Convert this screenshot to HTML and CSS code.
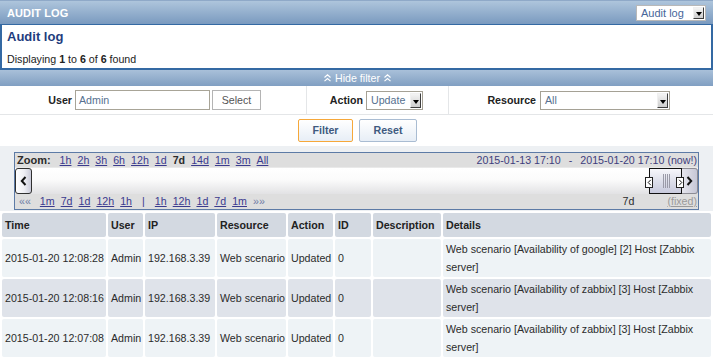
FILE: index.html
```html
<!DOCTYPE html>
<html>
<head>
<meta charset="utf-8">
<title>Audit log</title>
<link rel="stylesheet" href="styles.css">
</head>
<body>
<div class="page-header">
  <span class="page-title">AUDIT LOG</span>
  <div class="select select-header"><span class="select-text">Audit log</span><span class="select-arrow"></span></div>
</div>

<div class="title-box">
  <h1 class="title">Audit log</h1>
  <div class="paging">Displaying <b>1</b> to <b>6</b> of <b>6</b> found</div>
</div>

<div class="filter-toggle">
  <svg class="chev" width="7" height="8" viewBox="0 0 7 8"><path d="M0.5 3.5 L3.5 0.8 L6.5 3.5 M0.5 7.2 L3.5 4.5 L6.5 7.2" fill="none" stroke="#fff" stroke-width="1.1"/></svg>
  <span>Hide filter</span>
  <svg class="chev" width="7" height="8" viewBox="0 0 7 8"><path d="M0.5 3.5 L3.5 0.8 L6.5 3.5 M0.5 7.2 L3.5 4.5 L6.5 7.2" fill="none" stroke="#fff" stroke-width="1.1"/></svg>
</div>

<div class="filter">
  <div class="filter-row">
    <div class="fcell">
      <span class="flabel flabel-user">User</span>
      <div class="input input-user">Admin</div>
      <div class="btn-select">Select</div>
    </div>
    <div class="fcell">
      <span class="flabel flabel-action">Action</span>
      <div class="select select-action"><span class="select-text">Update</span><span class="select-arrow"></span></div>
    </div>
    <div class="fcell fcell-last">
      <span class="flabel flabel-resource">Resource</span>
      <div class="select select-resource"><span class="select-text">All</span><span class="select-arrow"></span></div>
    </div>
  </div>
  <div class="filter-buttons">
    <div class="btn btn-filter">Filter</div>
    <div class="btn btn-reset">Reset</div>
  </div>
</div>

<div class="timeline">
  <div class="tl-zoom">
    <div class="tl-links">
      <b class="tl-label">Zoom:</b>
      <a>1h</a><a>2h</a><a>3h</a><a>6h</a><a>12h</a><a>1d</a><b class="cur">7d</b><a>14d</a><a>1m</a><a>3m</a><a>All</a>
    </div>
    <div class="tl-dates"><span>2015-01-13 17:10</span><span class="dash">-</span><span>2015-01-20 17:10</span> <span>(now!)</span></div>
  </div>
  <div class="tl-scroll">
    <div class="tl-btn tl-btn-left">
      <svg width="7" height="10" viewBox="0 0 7 10"><path d="M5.5 1 L1.8 5 L5.5 9" fill="none" stroke="#111" stroke-width="2"/></svg>
    </div>
    <div class="tl-track">
      <div class="tl-handle">
        <span class="tl-grip-box tl-grip-left"><svg width="5" height="7" viewBox="0 0 5 7"><path d="M3.8 0.8 L1.2 3.5 L3.8 6.2" fill="none" stroke="#111" stroke-width="1"/></svg></span>
        <span class="tl-grip"></span>
        <span class="tl-grip-box tl-grip-right"><svg width="5" height="7" viewBox="0 0 5 7"><path d="M1.2 0.8 L3.8 3.5 L1.2 6.2" fill="none" stroke="#111" stroke-width="1"/></svg></span>
      </div>
    </div>
    <div class="tl-btn tl-btn-right">
      <svg width="7" height="10" viewBox="0 0 7 10"><path d="M1.5 1 L5.2 5 L1.5 9" fill="none" stroke="#111" stroke-width="2"/></svg>
    </div>
  </div>
  <div class="tl-nav">
    <div class="tl-links">
      <span class="arr arr-left">««</span>
      <a>1m</a><a>7d</a><a>1d</a><a>12h</a><a>1h</a>
      <span class="sep">|</span>
      <a>1h</a><a>12h</a><a>1d</a><a>7d</a><a>1m</a>
      <span class="arr">»»</span>
    </div>
    <div class="tl-period"><span class="period">7d</span><span class="fixed">(fixed)</span></div>
  </div>
</div>

<table class="log">
  <thead>
    <tr>
      <th class="c-time">Time</th>
      <th class="c-user">User</th>
      <th class="c-ip">IP</th>
      <th class="c-res">Resource</th>
      <th class="c-act">Action</th>
      <th class="c-id">ID</th>
      <th class="c-desc">Description</th>
      <th class="c-det">Details</th>
    </tr>
  </thead>
  <tbody>
    <tr class="row-odd">
      <td>2015-01-20 12:08:28</td><td>Admin</td><td>192.168.3.39</td><td>Web scenario</td><td>Updated</td><td>0</td><td></td>
      <td class="wrap">Web scenario [Availability of google] [2] Host [Zabbix server]</td>
    </tr>
    <tr class="row-even">
      <td>2015-01-20 12:08:16</td><td>Admin</td><td>192.168.3.39</td><td>Web scenario</td><td>Updated</td><td>0</td><td></td>
      <td class="wrap">Web scenario [Availability of zabbix] [3] Host [Zabbix server]</td>
    </tr>
    <tr class="row-odd">
      <td>2015-01-20 12:07:08</td><td>Admin</td><td>192.168.3.39</td><td>Web scenario</td><td>Updated</td><td>0</td><td></td>
      <td class="wrap">Web scenario [Availability of zabbix] [3] Host [Zabbix server]</td>
    </tr>
  </tbody>
</table>
</body>
</html>
```

FILE: styles.css
```css
* { box-sizing: border-box; }

body {
  margin: 0;
  background: #edf0f3;
  font-family: "Liberation Sans", Arial, sans-serif;
  font-size: 10.667px;
  color: #2b2b2b;
}

/* header */
.page-header {
  height: 24px;
  display: flex;
  align-items: center;
  justify-content: space-between;
  padding: 0 7px 0 7px;
  background: linear-gradient(#aec5dc, #7a9abf);
  border-top: 1px solid #8fa9c8;
}
.page-title {
  color: #fff;
  font-weight: bold;
  font-size: 11px;
  letter-spacing: 0.1px;
}

/* selects */
.select {
  display: flex;
  align-items: stretch;
  background: #fff;
  border: 1px solid #a5a195;
  height: 19px;
}
.select-text {
  flex: 1;
  padding-left: 4px;
  color: #56708f;
  line-height: 17px;
  font-size: 10.667px;
}
.select-arrow {
  width: 11px;
  margin: 1px 1px 1px 0;
  background: linear-gradient(#f4f4f4, #cdcdcd);
  border-right: 1px solid #3e3e3e;
  border-bottom: 1px solid #3e3e3e;
  border-top: 1px solid #f0f0f0;
  border-left: 1px solid #f0f0f0;
  position: relative;
}
.select-arrow::after {
  content: "";
  position: absolute;
  left: 2px;
  top: 6px;
  border-left: 3px solid transparent;
  border-right: 3px solid transparent;
  border-top: 4px solid #000;
}
.select-header {
  width: 70px;
  height: 16px;
  border-color: #b8b8b8;
}
.select-header .select-text {
  line-height: 14px;
  font-size: 11px;
  color: #46669a;
}
.select-header .select-arrow::after { top: 4px; }

/* title box */
.title-box {
  height: 46px;
  background: #fff;
  border: 2px solid #3469a3;
  border-top-width: 1px;
  padding: 4px 5px 0;
}
.title {
  margin: 0;
  font-size: 13px;
  line-height: 16px;
  font-weight: bold;
  color: #1f3d7e;
}
.paging {
  margin-top: 7px;
  line-height: 14px;
  color: #222;
}

/* filter toggle */
.filter-toggle {
  height: 16px;
  display: flex;
  align-items: center;
  justify-content: center;
  gap: 4px;
  color: #fff;
  background: linear-gradient(#a9c0d9, #819fc2);
  padding-left: 2px;
}
.filter-toggle span { line-height: 16px; }

/* filter */
.filter { background: #fff; }
.filter-row {
  display: grid;
  grid-template-columns: 307px 142px 1fr;
  height: 29px;
  border-bottom: 1px solid #e4e6e8;
}
.fcell {
  display: flex;
  align-items: center;
  border-right: 1px solid #e4e6e8;
}
.fcell-last { border-right: 0; }
.flabel {
  font-weight: bold;
  text-align: right;
  color: #222;
}
.flabel-user { width: 72px; margin-right: 3px; }
.flabel-action { width: 56px; margin-right: 3px; }
.flabel-resource { width: 87px; margin-right: 4px; }
.input {
  height: 20px;
  border: 1px solid #a8a497;
  padding-left: 3px;
  line-height: 18px;
  color: #56708f;
}
.input-user { width: 135px; }
.btn-select {
  width: 49px;
  height: 20px;
  margin-left: 2px;
  border: 1px solid #b4b4b4;
  text-align: center;
  line-height: 18px;
  color: #555;
}
.select-action { width: 57px; }
.select-resource { width: 130px; }

.filter-buttons {
  height: 31px;
  display: flex;
  justify-content: center;
  align-items: center;
  gap: 6px;
  padding-left: 2px;
}
.btn {
  height: 23px;
  line-height: 21px;
  border: 1px solid #a9bcd2;
  border-radius: 2px;
  background: linear-gradient(#ffffff, #e7eef6);
  color: #3f5a7f;
  font-weight: bold;
  text-align: center;
}
.btn-filter { width: 55px; border-color: #f6a83a; }
.btn-reset { width: 58px; }

/* timeline */
.timeline {
  margin: 6px 14px 0;
  border: 1px solid #5d7ba6;
  background: #fff;
}
.tl-zoom, .tl-nav {
  height: 15px;
  display: flex;
  align-items: center;
  justify-content: space-between;
  background: #dedede;
  line-height: 15px;
}
.tl-zoom { padding: 0 1px 0 2px; border-bottom: 1px solid #e9e9e9; height: 15px; }
.tl-nav { padding: 0 1px 0 4px; }
.tl-links { display: flex; gap: 6px; }
.tl-links a {
  color: #3b3b8e;
  text-decoration: underline;
}
.tl-label { margin-right: 3px; color: #2b2b2b; font-size: 11px; }
.cur { color: #2b2b2b; }
.tl-dates { color: #3d3d7c; }
.dash { margin: 0 8px 0 8px; }
.arr { color: #6e7da6; }
.arr-left { margin-right: 3px; }
.sep { margin: 0 4px; color: #3b3b8e; }
.tl-period { display: flex; }
.period { margin-right: 33px; }
.fixed { color: #9a9a9a; text-decoration: underline; }

.tl-scroll {
  display: flex;
  height: 26px;
  background: linear-gradient(#ffffff, #fbfbfb 45%, #e2e2e4);
}
.tl-btn {
  display: flex;
  align-items: center;
  justify-content: center;
}
.tl-btn-left {
  width: 17px;
  border: 1px solid #303030;
  border-radius: 3px;
  background: linear-gradient(to right, #ffffff, #eeeef3 55%, #c9cad8);
}
.tl-btn-right {
  width: 16px;
  border: 1px solid #8c8c94;
  border-left: 0;
  border-radius: 0 3px 3px 0;
  background: linear-gradient(to right, #e6e6ee, #c6c7d6);
}
.tl-track {
  flex: 1;
  display: flex;
  justify-content: flex-end;
}
.tl-handle {
  width: 33px;
  border: 1px solid #111;
  background: linear-gradient(#f6f6fb, #d9dbe8 60%, #c8cadd);
  position: relative;
  display: flex;
  justify-content: center;
  align-items: center;
}
.tl-grip {
  width: 7px;
  height: 14px;
  margin-left: 2px;
  background: repeating-linear-gradient(to right, #9a9aa8 0, #9a9aa8 1px, transparent 1px, transparent 2px);
}
.tl-grip-box {
  position: absolute;
  top: 8px;
  width: 8px;
  height: 11px;
  background: #fff;
  border: 1px solid #222;
  display: flex;
  align-items: center;
  justify-content: center;
}
.tl-grip-left { left: -5px; }
.tl-grip-right { left: 26px; }

/* log table */
.log {
  width: 713px;
  margin-top: 1px;
  border-collapse: separate;
  border-spacing: 2px;
  table-layout: fixed;
  background: #fff;
}
.log th, .log td {
  text-align: left;
  vertical-align: middle;
  padding: 0 2px 0 3px;
  border-radius: 2px;
  white-space: nowrap;
}
.log th {
  height: 24px;
  line-height: 14px;
  background: #d3d9e1;
  font-weight: bold;
  color: #222;
}
.log td {
  height: 38px;
  line-height: 18px;
  color: #2b2b2b;
}
.log td.wrap { white-space: normal; }
.row-odd td { background: #eef3f6; }
.row-even td { background: #dfe3ea; }
.c-time { width: 104px; }
.c-user { width: 35px; }
.c-ip { width: 70px; }
.c-res { width: 69px; }
.c-act { width: 45px; }
.c-id { width: 36px; }
.c-desc { width: 68px; }
.c-det { width: 268px; }
```
